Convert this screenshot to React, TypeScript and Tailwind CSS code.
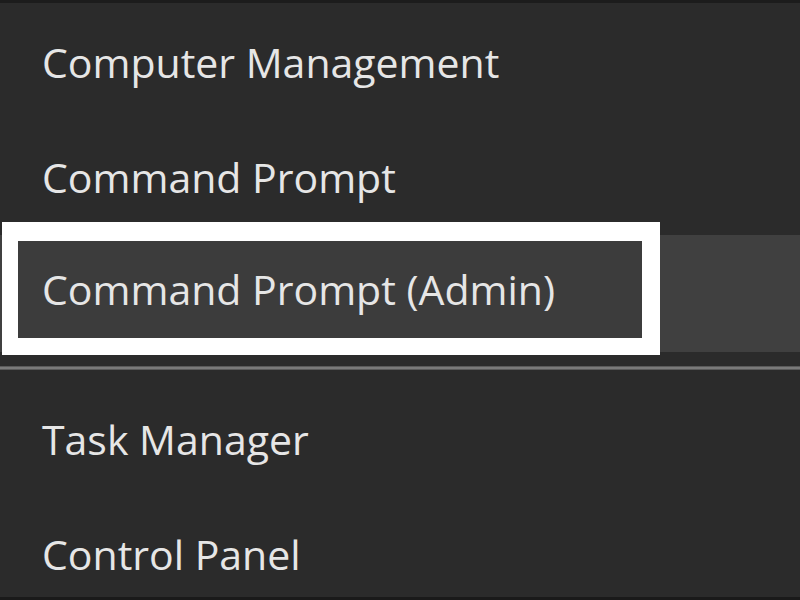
import React from "react";

const font = { fontFamily: '"Open Sans", "Noto Sans", sans-serif' };

function Item({ label }: { label: string }) {
  return (
    <div className="flex h-[115px] items-center pl-[42px] text-[41px] text-[#e6e6e6]">
      {label}
    </div>
  );
}

export default function App() {
  return (
    <div
      className="h-[600px] w-[800px] overflow-hidden border-t-[3px] border-b-[3px] border-t-[#1c1c1c] border-b-[#1a1a1a] bg-[#2b2b2b]"
      style={font}
    >
      <div className="h-[2px]" />
      <Item label="Computer Management" />
      <Item label="Command Prompt" />

      {/* highlighted row with the white annotation frame over it */}
      <div className="relative h-[117px] bg-[#404040]">
        <div className="absolute left-[2px] top-[-13px] h-[133px] w-[658px] border-t-[19px] border-r-[18px] border-b-[17px] border-l-[16px] border-white bg-[#3c3c3c]">
          <div className="flex h-full items-center pl-[24px] text-[41px] text-[#e6e6e6]">
            Command Prompt (Admin)
          </div>
        </div>
      </div>

      <div className="mt-[14px] h-[4px] border-y border-[#5a5a5a] bg-[#7a7a7a]" />

      <div className="mt-[12px]">
        <Item label="Task Manager" />
        <Item label="Control Panel" />
      </div>
    </div>
  );
}
